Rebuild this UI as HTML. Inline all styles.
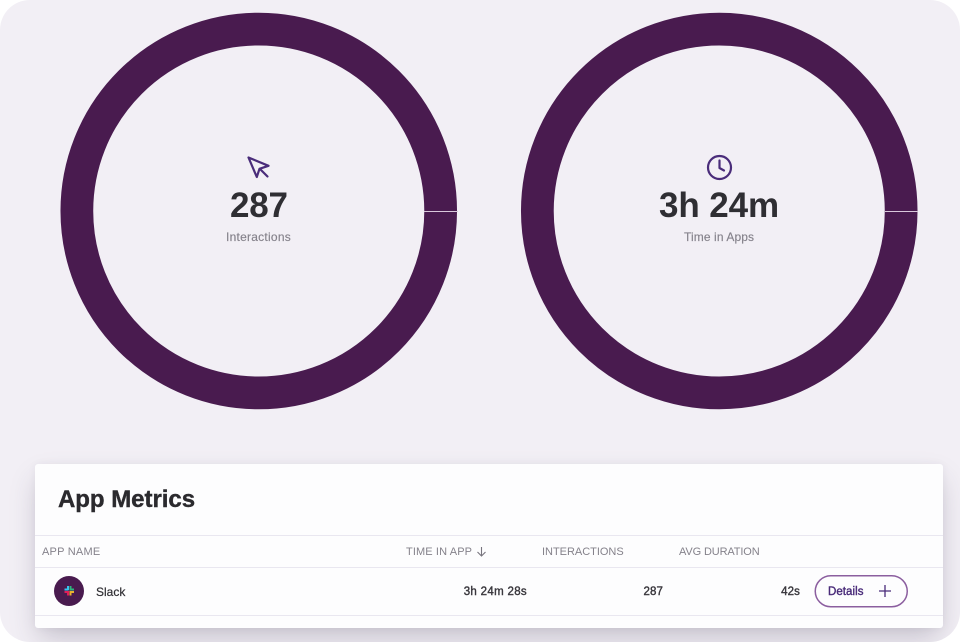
<!DOCTYPE html>
<html>
<head>
<meta charset="utf-8">
<style>
html,body{margin:0;padding:0;background:#fff;width:960px;height:642px;overflow:hidden}
body{font-family:"Liberation Sans",sans-serif;position:relative}
#bg{position:absolute;left:0;top:0;width:960px;height:642px;background:#f2eff5;border-radius:30px;overflow:hidden}
.t{position:absolute;white-space:nowrap;line-height:1}
#card{position:absolute;left:35px;top:464px;width:908px;height:164px;background:#fdfdfe;border-radius:3px;box-shadow:0 13px 26px -4px rgba(60,50,80,.25),0 0 8px rgba(60,50,80,.05)}
.l{position:absolute;left:35px;width:908px;height:1px;background:#e9e7f0}
.h{font-size:11px;color:#85828b;top:547px;letter-spacing:.22px}
.v{font-size:11.500px;color:#38363c;top:587px;-webkit-text-stroke:.4px #38363c;letter-spacing:.1px}
</style>
</head>
<body>
<div id="bg">
<svg style="position:absolute;left:0;top:0" width="960" height="642">
<circle cx="258.750" cy="211" r="181.900" fill="none" stroke="#491b4f" stroke-width="32.750"/>
<circle cx="719.250" cy="211" r="181.900" fill="none" stroke="#491b4f" stroke-width="32.750"/>
<rect x="424" y="211" width="34" height="1" fill="#d9c8dc"/>
<rect x="885" y="211" width="33" height="1" fill="#d9c8dc"/>
<g fill="none" stroke="#4a2c7a" stroke-width="2.200" stroke-linejoin="round" stroke-linecap="round">
<path d="M248.500 157.500L268.500 165.800L259.500 168.800L256.800 177Z"/>
<path d="M260 169L267.500 176.500"/>
<circle cx="719.500" cy="167.500" r="11.500"/>
<path d="M719.500 160.500V168L724 170.500"/>
</g>
</svg>
<div class="t" style="left:230px;top:188px;font-size:35px;font-weight:bold;color:#2f2e33;letter-spacing:-.2px">287</div>
<div class="t" style="left:226px;top:231px;font-size:12px;color:#85828b;letter-spacing:.25px;-webkit-text-stroke:.15px #85828b">Interactions</div>
<div class="t" style="left:659px;top:188px;font-size:35px;font-weight:bold;color:#2f2e33;letter-spacing:-.1px">3h 24m</div>
<div class="t" style="left:684px;top:231px;font-size:12px;color:#85828b;letter-spacing:.1px;-webkit-text-stroke:.15px #85828b">Time in Apps</div>
<div id="card"></div>
<div class="l" style="top:535px"></div>
<div class="l" style="top:567px"></div>
<div class="l" style="top:615px"></div>
<div class="t" style="left:58px;top:488px;font-size:24px;font-weight:bold;color:#2b2a2e;-webkit-text-stroke:.4px #2b2a2e;letter-spacing:-.03px">App Metrics</div>
<div class="t h" style="left:42px">APP NAME</div>
<div class="t h" style="left:406px;letter-spacing:.12px">TIME IN APP</div>
<svg style="position:absolute;left:476px;top:546px" width="11" height="11"><path d="M5.500 1V10M1.500 6L5.500 10L9.500 6" fill="none" stroke="#77747d" stroke-width="1.100"/></svg>
<div class="t h" style="left:542px;letter-spacing:-.02px">INTERACTIONS</div>
<div class="t h" style="left:679px;letter-spacing:-.13px">AVG DURATION</div>
<svg style="position:absolute;left:54px;top:576px" width="30" height="30">
<circle cx="15" cy="15" r="15" fill="#491b4f"/>
<rect x="10.500" y="12.500" width="4" height="2" fill="#36c5f0"/>
<rect x="13" y="10" width="2" height="4" fill="#36c5f0"/>
<rect x="15.500" y="10" width="2" height="4.500" fill="#2eb67d"/>
<rect x="15.500" y="12.500" width="4.500" height="2" fill="#2eb67d"/>
<rect x="10.500" y="15" width="4.500" height="2" fill="#e01e5a"/>
<rect x="13" y="15" width="2" height="4.500" fill="#e01e5a"/>
<rect x="15.500" y="15" width="4.500" height="2" fill="#ecb22e"/>
<rect x="15.500" y="15" width="2" height="4.500" fill="#ecb22e"/>
</svg>
<div class="t" style="left:96px;top:586px;font-size:12px;color:#2f2e33;-webkit-text-stroke:.2px #2f2e33">Slack</div>
<div class="t v" style="right:433px;letter-spacing:.32px">3h 24m 28s</div>
<div class="t v" style="right:297px">287</div>
<div class="t v" style="right:160px">42s</div>
<svg style="position:absolute;left:813px;top:574px" width="96" height="35"><rect x="2.250" y="1.750" width="92" height="31" rx="15.500" fill="#fdfdfe" stroke="#8b5e9f" stroke-width="1.500"/></svg>
<div class="t" style="left:828px;top:586.500px;font-size:11.500px;color:#4a2c7a;-webkit-text-stroke:.4px #4a2c7a;letter-spacing:.05px">Details</div>
<svg style="position:absolute;left:878px;top:584px" width="14" height="14"><path d="M7 1V13M1 7H13" fill="none" stroke="#4a2c7a" stroke-width="1.300"/></svg>
</div>
</body>
</html>
